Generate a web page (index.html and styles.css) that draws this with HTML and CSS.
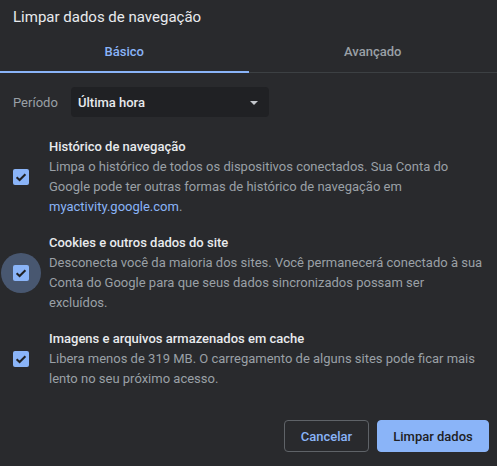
FILE: index.html
```html
<!DOCTYPE html>
<html lang="pt-BR">
<head>
<meta charset="utf-8">
<title>Limpar dados de navegação</title>
<link rel="stylesheet" href="styles.css">
</head>
<body>
<div class="dialog">
  <div class="title">Limpar dados de navegação</div>
  <div class="tabs">
    <div class="tab active">Básico</div>
    <div class="tab">Avançado</div>
  </div>
  <div class="period">
    <span class="period-label">Período</span>
    <div class="select">
      <span class="select-value">Última hora</span>
      <span class="select-arrow"></span>
    </div>
  </div>
  <div class="items">
    <div class="item">
      <div class="check-wrap">
        <span class="checkbox"><svg viewBox="0 0 16 16" width="16" height="16"><path d="M3.6 8.2 L6.6 11 L12.4 5.2" fill="none" stroke="#202124" stroke-width="2"/></svg></span>
      </div>
      <div class="item-text">
        <div class="item-title">Histórico de navegação</div>
        <div class="item-desc">Limpa o histórico de todos os dispositivos conectados. Sua Conta do Google pode ter outras formas de histórico de navegação em <span class="link">myactivity.google.com</span>.</div>
      </div>
    </div>
    <div class="item">
      <div class="check-wrap">
        <span class="ripple"></span>
        <span class="checkbox"><svg viewBox="0 0 16 16" width="16" height="16"><path d="M3.6 8.2 L6.6 11 L12.4 5.2" fill="none" stroke="#202124" stroke-width="2"/></svg></span>
      </div>
      <div class="item-text">
        <div class="item-title">Cookies e outros dados do site</div>
        <div class="item-desc">Desconecta você da maioria dos sites. Você permanecerá conectado à sua Conta do Google para que seus dados sincronizados possam ser excluídos.</div>
      </div>
    </div>
    <div class="item">
      <div class="check-wrap">
        <span class="checkbox"><svg viewBox="0 0 16 16" width="16" height="16"><path d="M3.6 8.2 L6.6 11 L12.4 5.2" fill="none" stroke="#202124" stroke-width="2"/></svg></span>
      </div>
      <div class="item-text">
        <div class="item-title">Imagens e arquivos armazenados em cache</div>
        <div class="item-desc">Libera menos de 319 MB. O carregamento de alguns sites pode ficar mais lento no seu próximo acesso.</div>
      </div>
    </div>
  </div>
  <div class="buttons">
    <button class="btn btn-cancel">Cancelar</button>
    <button class="btn btn-primary">Limpar dados</button>
  </div>
</div>
</body>
</html>
```
FILE: styles.css
```css
html, body {
  margin: 0;
  padding: 0;
  background: #292a2d;
}
body {
  font-family: Roboto, "Liberation Sans", sans-serif;
  color: #e8eaed;
  width: 497px;
  height: 466px;
  overflow: hidden;
}
.dialog {
  display: flex;
  flex-direction: column;
}
.title {
  padding: 7px 13px 0;
  font-size: 15px;
  line-height: 20px;
  color: #e8eaed;
}
.tabs {
  margin-top: 3px;
  display: flex;
  border-bottom: 1px solid #3c4043;
}
.tab {
  flex: 1;
  text-align: center;
  font-size: 13px;
  font-weight: 500;
  line-height: 20px;
  padding: 12px 0 9px;
  color: #9aa0a6;
  border-bottom: 2px solid transparent;
  margin-bottom: -1px;
}
.tab.active {
  color: #8ab4f8;
  border-bottom-color: #8ab4f8;
}
.period {
  margin-top: 14px;
  display: flex;
  align-items: center;
  padding-left: 13px;
}
.period-label {
  font-size: 13px;
  color: #9aa0a6;
  width: 58px;
}
.select {
  width: 198px;
  height: 30px;
  box-sizing: border-box;
  background: #202124;
  border-radius: 4px;
  display: flex;
  align-items: center;
  justify-content: space-between;
  padding: 0 8px 0 7px;
}
.select-value {
  font-size: 13px;
  font-weight: 500;
  color: #e8eaed;
}
.select-arrow {
  width: 0;
  height: 0;
  border-left: 4px solid transparent;
  border-right: 4px solid transparent;
  border-top: 4px solid #c4c7cc;
  margin-right: 3px;
  margin-top: 1px;
}
.items {
  margin-top: 20px;
  display: flex;
  flex-direction: column;
  gap: 16px;
}
.item {
  display: flex;
  align-items: center;
  padding: 0 13px;
}
.check-wrap {
  position: relative;
  width: 16px;
  height: 16px;
  margin-right: 20px;
  flex: none;
}
.ripple {
  position: absolute;
  left: -12px;
  top: -12px;
  width: 40px;
  height: 40px;
  border-radius: 50%;
  background: rgba(138, 180, 248, 0.33);
}
.checkbox {
  position: relative;
  display: block;
  width: 16px;
  height: 16px;
  background: #8ab4f8;
  border-radius: 2px;
}
.checkbox svg {
  display: block;
}
.item-text {
  font-size: 13px;
  line-height: 20px;
}
.item-title {
  font-weight: 500;
  color: #e8eaed;
}
.item-desc {
  color: #9aa0a6;
}
.link {
  color: #8ab4f8;
}
.buttons {
  margin-top: 31px;
  display: flex;
  justify-content: flex-end;
  gap: 8px;
  padding-right: 8px;
}
.btn {
  font-family: Roboto, "Liberation Sans", sans-serif;
  font-size: 13px;
  font-weight: 500;
  height: 32px;
  border-radius: 4px;
  box-sizing: border-box;
  padding: 0;
  white-space: nowrap;
}
.btn-cancel {
  width: 85px;
  background: transparent;
  border: 1px solid #5f6368;
  color: #8ab4f8;
}
.btn-primary {
  width: 112px;
  background: #8ab4f8;
  border: 1px solid #8ab4f8;
  color: #202124;
}
```
